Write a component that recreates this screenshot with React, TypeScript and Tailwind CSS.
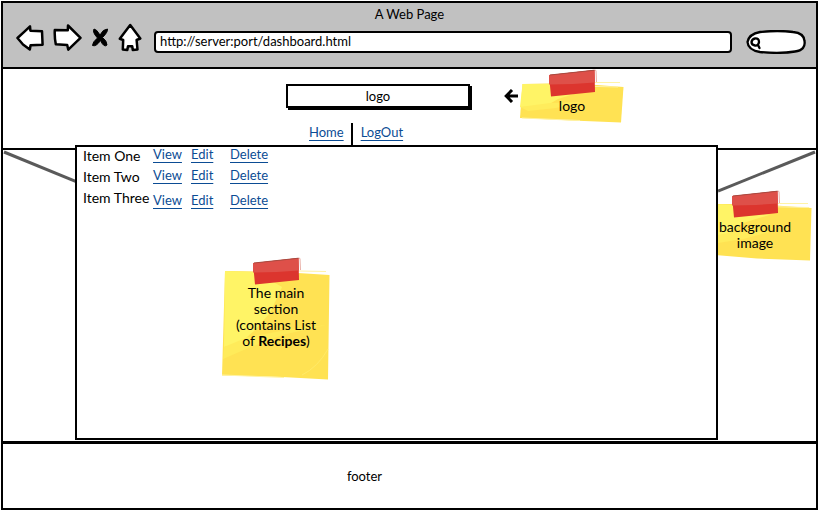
import type { ReactNode } from "react";

const stroke = {
  fill: "#fff",
  stroke: "#000",
  strokeWidth: 2.5,
  strokeLinejoin: "round",
  strokeLinecap: "round",
} as const;

function BackIcon() {
  return (
    <svg width="28" height="27" viewBox="0 0 28 27" {...stroke}>
      <path d="M1.5 14 Q8 8 14 2.3 L14.4 6.7 26 7.2 26.6 20.8 14.6 21.3 13.8 25.5 7 20.5Z" />
    </svg>
  );
}

function ForwardIcon() {
  return (
    <svg width="29" height="28" viewBox="0 0 29 28" {...stroke}>
      <path d="M1.8 7 14.8 7.3 15 2.5 27.5 14.8 15.3 26.7 14.2 22 2.8 21.3Q1.4 14 1.8 7Z" />
    </svg>
  );
}

function StopIcon() {
  return (
    <svg width="18" height="21" viewBox="0 0 18 21" fill="#000" stroke="#000" strokeWidth="1" strokeLinejoin="round">
      <path d="M3 2Q5.500 2 9 8Q12 2 16.500 2Q17 5 11.500 10.500Q16 14 16 18Q13 21 9.500 13.500Q5 20 1.500 18.500Q1.500 15 6.500 11Q1 5 3 2Z" />
    </svg>
  );
}

function HomeIcon() {
  return (
    <svg width="24" height="29" viewBox="0 0 24 29" {...stroke}>
      <path d="M12.2 2 22.3 15.5 18.6 17 19.5 26.5 14.8 27 14.2 23.2 10 23.2 9.3 27 4.8 26.5 5.2 17 1.8 15.8Z" />
    </svg>
  );
}

function IconButton({ label, children }: { label: string; children: ReactNode }) {
  return (
    <button type="button" aria-label={label} className="flex">
      {children}
    </button>
  );
}

function Tape() {
  return (
    <g>
      <path d="M0 6 45.5 1 46 23 2 27.5Z" fill="#dc352e" />
      <path d="M0 6 45.5 1 46 13.5 24 15 0 15.5Z" fill="#de5049" />
      <path d="M45.8 1 47 1.5 47.5 13" fill="none" stroke="#e9b0a8" strokeWidth="1" />
      <path d="M1 6 45.5 1.2" fill="none" stroke="#a84a40" strokeWidth="1" />
    </g>
  );
}

function WideNote({ children, tall = false }: { children: ReactNode; tall?: boolean }) {
  return (
    <div className="relative w-26 pt-[29px] text-center text-sm leading-4">
      {tall ? (
        <svg className="absolute left-0 top-0" width="110" height="72" viewBox="0 0 110 72">
          <path d="M2 14 52 14 108.5 18 107 70.5 54 68.5 0 64Z" fill="#ffe253" />
          <path d="M2 14 44 15 66 25 40 33 26 44 0 47Z" fill="#fff466" />
          <path d="M0 48 30 42 70 41 40 49 8 54Z" fill="#ffec5c" />
          <path d="M62 13.5 105 13.5M62 16.5 106 17.5" fill="none" stroke="#fff3a6" strokeWidth="1" />
          <g transform="translate(29 0)">
            <Tape />
          </g>
        </svg>
      ) : (
        <svg className="absolute left-0 top-0" width="104" height="54" viewBox="0 0 104 54">
          <path d="M2.5 15 50 14 103.5 18 101 53.5 52 51.5 0 49Z" fill="#ffe253" />
          <path d="M2.5 15 42 15 60 23 38 30 26 37 0 38Z" fill="#fff466" />
          <path d="M0 38 30 34 62 33 36 39 8 42Z" fill="#ffec5c" />
          <path d="M48 13.5 100 13.5M58 17 98 18M2 49 60 51.5" fill="none" stroke="#fff3a6" strokeWidth="1" />
          <g transform="translate(29 0)">
            <Tape />
          </g>
        </svg>
      )}
      <div className="relative">{children}</div>
    </div>
  );
}

function SquareNote({ children }: { children: ReactNode }) {
  return (
    <div className="relative h-31 w-27 px-2 pt-7 text-center text-sm leading-4">
      <svg className="absolute left-0 top-0" width="108" height="124" viewBox="0 0 108 124">
        <path d="M3 14 60 15 107.5 18 106 122.5 60 120 0 118.5Z" fill="#ffe253" />
        <path d="M3 14 34 15 60 30 48 56 32 74 18 86 2 90Z" fill="#fff466" />
        <path d="M2 90 26 80 70 72 104 68 60 78 24 92 1 102Z" fill="#ffeb5a" />
        <path d="M80 118Q96 110 106 92" fill="none" stroke="#ffea68" strokeWidth="1" />
        <path d="M76 14 104 14.5M0 118 62 120.5" fill="none" stroke="#fff3a6" strokeWidth="1" />
        <g transform="translate(31 0)">
          <Tape />
        </g>
      </svg>
      <div className="relative">{children}</div>
    </div>
  );
}

function Link({ children }: { children: ReactNode }) {
  return (
    <a href="#" className="text-[#0b4c94] underline decoration-1 underline-offset-3">
      {children}
    </a>
  );
}

const items = [
  { name: "Item One", align: "align-top" },
  { name: "Item Two", align: "align-top" },
  { name: "Item Three", align: "align-middle" },
];

export default function App() {
  return (
    <div className="bg-white p-px font-['Lato',sans-serif] text-[13px] leading-4 text-black">
      <div className="border-2 border-black">
        <header className="h-[66px] border-b-2 border-black bg-[#c1c1c1]">
          <h1 className="pt-[3px] text-center leading-4">A Web Page</h1>
          <div className="-mt-0.5 flex items-center gap-3 pr-2.5 pl-[13px]">
            <div className="flex items-center gap-[9px]">
              <IconButton label="Back"><BackIcon /></IconButton>
              <IconButton label="Forward"><ForwardIcon /></IconButton>
              <IconButton label="Stop"><StopIcon /></IconButton>
              <IconButton label="Home"><HomeIcon /></IconButton>
            </div>
            <input
              aria-label="Address"
              defaultValue="http://server:port/dashboard.html"
              className="mt-2.5 h-[22px] min-w-0 flex-1 rounded-[4px] border-2 border-black bg-white px-1 pb-0.5 leading-4 outline-none"
            />
            <label className="relative mt-2.5 ml-0.5 flex h-6 w-15">
              <svg className="absolute inset-0" width="60" height="24" viewBox="0 0 60 24" {...stroke} strokeWidth="2.300">
                <path d="M14 2Q32 0 47 2Q58 3 58.5 11Q60 20 49 21.500Q34 24 14 22Q2 20 1.500 12Q3 4 14 2Z" />
                <path d="M9 8.500Q13 8 13 12Q12.500 16 9 15.500Q5.500 15 5.500 12Q6 9 9 8.500ZM12 15 13.500 18" />
              </svg>
              <input aria-label="Search" className="relative ml-4 w-10 bg-transparent outline-none" />
            </label>
          </div>
        </header>

        <section className="h-[81px] border-b-2 border-black pl-[283px]">
          <div className="flex h-[54px] items-center">
            <button
              type="button"
              className="h-6 w-[184px] border-2 border-black bg-white leading-4 shadow-[2px_2px_0_#000]"
            >
              logo
            </button>
            <svg className="mr-0.5 ml-[34px]" width="14" height="14" viewBox="0 0 14 14" fill="none" stroke="#000" strokeWidth="3">
              <path d="M8 1 2.200 7 8 13M2 7H14" />
            </svg>
            <div className="h-[54px]">
              <WideNote>logo</WideNote>
            </div>
          </div>
          <nav className="flex h-6 pl-[23px]">
            <span className="border-r-2 border-black pt-px pr-[7px]"><Link>Home</Link></span>
            <span className="pt-px pl-2"><Link>LogOut</Link></span>
          </nav>
        </section>

        <main className="flex h-[291px]">
          <svg className="w-[72px] shrink-0" height="40" viewBox="0 0 72 40">
            <path d="M1 2 73 31.500" stroke="#5a5a5a" strokeWidth="3" />
          </svg>
          <div className="relative -mt-[5px] h-[295px] min-w-0 flex-1 border-2 border-black bg-white">
            <table className="ml-1.5 border-collapse text-left">
              <tbody>
                {items.map((item) => (
                  <tr key={item.name} className="h-[21px]">
                    <th scope="row" className="w-[70px] p-0 align-top text-sm leading-[18px] font-normal whitespace-nowrap">
                      {item.name}
                    </th>
                    <td className={`w-[38px] p-0 leading-3.5 ${item.align}`}><Link>View</Link></td>
                    <td className={`w-[39px] p-0 leading-3.5 ${item.align}`}><Link>Edit</Link></td>
                    <td className={`p-0 leading-3.5 ${item.align}`}><Link>Delete</Link></td>
                  </tr>
                ))}
              </tbody>
            </table>
            <div className="mt-[47px] ml-[145px]">
              <SquareNote>
                The main section (contains List of <b>Recipes</b>)
              </SquareNote>
            </div>
          </div>
          <aside className="w-[98px] shrink-0 overflow-hidden">
            <svg className="overflow-visible" width="98" height="40" viewBox="0 0 98 40">
              <path d="M0 41 97 2" stroke="#5a5a5a" strokeWidth="3" />
            </svg>
            <div className="-ml-[15px]">
              <WideNote tall>
                background
                <br />
                image
              </WideNote>
            </div>
          </aside>
        </main>

        <footer className="flex h-[67px] items-center justify-center border-t-3 border-black pr-[90px]">
          footer
        </footer>
      </div>
    </div>
  );
}
